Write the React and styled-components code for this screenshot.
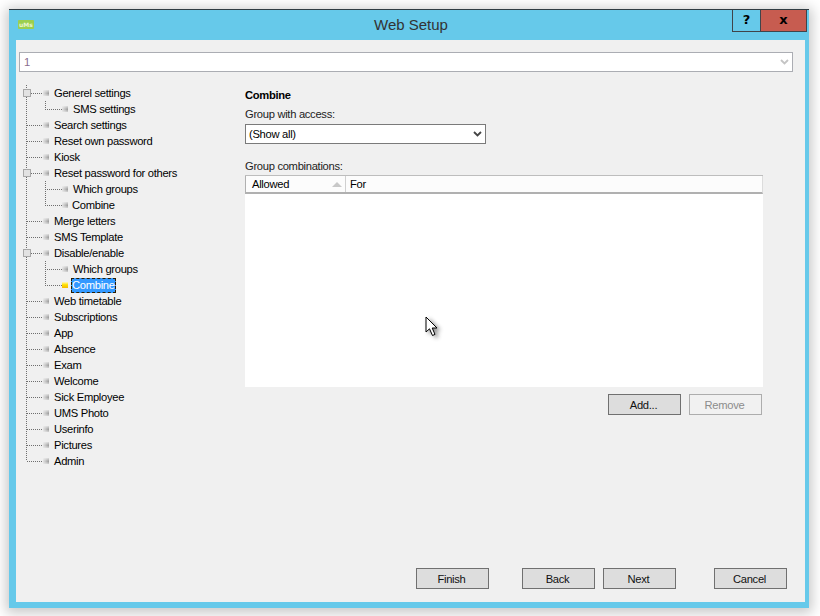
import React from "react";
import styled, { createGlobalStyle } from "styled-components";

const GlobalStyle = createGlobalStyle`
    html, body {
        margin: 0;
        padding: 0;
        background: #ffffff;
    }
    body {
        font-family: "Liberation Sans", Arial, sans-serif;
        font-size: 11.2px;
        letter-spacing: -0.3px;
        color: #000;
    }
`;

const Page = styled.div`
    width: 820px;
    height: 616px;
    padding: 9px 11px 8px 9px;
    box-sizing: border-box;
    overflow: hidden;
`;

const Window = styled.div`
    position: relative;
    height: 100%;
    display: flex;
    flex-direction: column;
    background: #66c9ea;
    border-top: 1px solid #2f3b42;
    box-sizing: border-box;
    box-shadow: 0 2px 12px 3px rgba(0, 0, 0, 0.22);
`;

const TitleBar = styled.div`
    height: 30px;
    display: flex;
    align-items: flex-start;
    justify-content: space-between;
    flex-shrink: 0;
`;

const Logo = styled.div`
    width: 16px;
    height: 9px;
    margin: 10px 0 0 9px;
    background: #9bcf4f;
    color: #eaf6d2;
    font-family: "DejaVu Sans", sans-serif;
    font-size: 6px;
    font-weight: bold;
    line-height: 9px;
    text-align: center;
    letter-spacing: 0;
    border-radius: 1px;
`;

const Title = styled.div`
    flex: 1;
    padding-left: 56px;
    text-align: center;
    font-size: 15px;
    letter-spacing: 0;
    line-height: 30px;
    color: #333;
`;

const Controls = styled.div`
    display: flex;
    margin-right: 2px;
    height: 21px;
    border: solid #40444a;
    border-width: 0 1px 1px 1px;
`;

const ControlButton = styled.div`
    width: ${(p) => p.$width}px;
    background: ${(p) => p.$bg};
    border-left: ${(p) => (p.$divided ? "1px solid #40444a" : "none")};
    font-family: "DejaVu Sans", sans-serif;
    font-size: 13px;
    font-weight: bold;
    letter-spacing: 0;
    line-height: 19px;
    text-align: center;
    color: #000;
`;

const Body = styled.div`
    flex: 1;
    margin: 0 4px 6px 7px;
    padding: 12px 12px 13px 3px;
    background: #f0f0f0;
    display: flex;
    flex-direction: column;
`;

const TopCombo = styled.div`
    height: 20px;
    box-sizing: border-box;
    background: #fff;
    border: 1px solid #abadb3;
    display: flex;
    align-items: center;
    justify-content: space-between;
    padding: 0 3px 0 4px;
    color: #8a6d8f;
    flex-shrink: 0;
`;

const Main = styled.div`
    flex: 1;
    display: flex;
    margin-top: 13px;
`;

const Tree = styled.div`
    width: 226px;
    flex-shrink: 0;
`;

const Row = styled.div`
    display: flex;
    align-items: center;
    height: 16px;
    white-space: nowrap;
`;

const Connector = styled.svg`
    flex-shrink: 0;
    display: block;
`;

const NodeIcon = styled.span`
    width: 6px;
    height: 6px;
    flex-shrink: 0;
    background: ${(p) =>
        p.$active
            ? "linear-gradient(180deg, #fff8c0, #ffe100 45%, #f5b800)"
            : "linear-gradient(90deg, rgba(240, 240, 240, 0.85), rgba(240, 240, 240, 0)), linear-gradient(180deg, #dcdcdc, #969696 55%, #d0d0d0)"};
`;

const NodeLabel = styled.span`
    margin-left: ${(p) => p.$gap}px;
    height: 15px;
    line-height: 15px;
    ${(p) =>
        p.$selected &&
        `
        background: #3399ff;
        color: #fff;
        outline: 1px dashed #2a1c00;
        outline-offset: -1px;
        padding: 0 1px;
    `}
`;

const Panel = styled.div`
    flex: 1;
    display: flex;
    flex-direction: column;
    align-items: flex-start;
`;

const Heading = styled.div`
    font-weight: 700;
    line-height: 16px;
    margin-top: 2px;
`;

const FieldLabel = styled.div`
    line-height: 16px;
    margin-top: ${(p) => p.$top}px;
    color: #222;
`;

const Select = styled.div`
    width: 241px;
    height: 20px;
    margin-top: 2px;
    box-sizing: border-box;
    background: #fff;
    border: 1px solid #7a7a7a;
    display: flex;
    align-items: center;
    justify-content: space-between;
    padding: 0 3px;
`;

const ListView = styled.div`
    width: 518px;
    height: 212px;
    margin-top: 1px;
    background: #fff;
    box-sizing: border-box;
    border-top: 1px solid #bdbdbd;
`;

const ListHeader = styled.div`
    display: flex;
    height: 18px;
    box-sizing: border-box;
    background: #fcfcfc;
    border-bottom: 2px solid #b0b0b0;
    border-left: 1px solid #b0b0b0;
    border-right: 1px solid #dcdcdc;
`;

const Column = styled.div`
    width: ${(p) => p.$width};
    flex: ${(p) => (p.$width ? "none" : 1)};
    display: flex;
    align-items: center;
    justify-content: space-between;
    box-sizing: border-box;
    padding: 0 3px 0 ${(p) => p.$pad}px;
    border-right: ${(p) => (p.$width ? "1px solid #d0d0d0" : "none")};
`;

const SortArrow = styled.span`
    width: 0;
    height: 0;
    border-left: 5px solid transparent;
    border-right: 5px solid transparent;
    border-bottom: 5px solid #c8c8c8;
`;

const ListActions = styled.div`
    display: flex;
    gap: 8px;
    margin: 7px 0 0 363px;
`;

const Button = styled.div`
    width: 73px;
    height: 21px;
    box-sizing: border-box;
    padding-right: 2px;
    background: ${(p) => (p.$disabled ? "#f1f1f1" : "#dddddd")};
    border: 1px solid ${(p) => (p.$disabled ? "#adadad" : "#707070")};
    color: ${(p) => (p.$disabled ? "#8c8c8c" : "#111")};
    display: flex;
    align-items: center;
    justify-content: center;
`;

const Footer = styled.div`
    display: flex;
    flex-shrink: 0;
    padding-left: 397px;
`;

const FooterGroup = styled.div`
    display: flex;
    gap: 8px;
    margin-left: ${(p) => p.$left}px;
`;

const Cursor = styled.svg`
    position: absolute;
    left: 416px;
    top: 306px;
    overflow: visible;
    filter: drop-shadow(3px 2px 2px rgba(0, 0, 0, 0.45));
`;

const nodes = [
    { label: "Generel settings", box: true, next: true },
    { label: "SMS settings", depth: 1, last: true },
    { label: "Search settings" },
    { label: "Reset own password" },
    { label: "Kiosk" },
    { label: "Reset password for others", box: true, next: true },
    { label: "Which groups", depth: 1 },
    { label: "Combine", depth: 1, last: true, gap: 4 },
    { label: "Merge letters" },
    { label: "SMS Template" },
    { label: "Disable/enable", box: true, next: true },
    { label: "Which groups", depth: 1 },
    { label: "Combine", depth: 1, last: true, selected: true, gap: 3 },
    { label: "Web timetable" },
    { label: "Subscriptions" },
    { label: "App" },
    { label: "Absence" },
    { label: "Exam" },
    { label: "Welcome" },
    { label: "Sick Employee" },
    { label: "UMS Photo" },
    { label: "Userinfo" },
    { label: "Pictures" },
    { label: "Admin", end: true },
];

const dots = { stroke: "#6e6e6e", strokeWidth: 1, strokeDasharray: "1 1", shapeRendering: "crispEdges" };

const TreeLines = ({ depth, box, next, last, end }) => {
    const width = depth ? 43 : 24;
    return (
        <Connector width={width} height="16">
            <line x1="7.5" y1="0" x2="7.5" y2={end ? 8 : 16} {...dots} />
            {depth ? (
                <>
                    <line x1="26.5" y1="0" x2="26.5" y2={last ? 8 : 16} {...dots} />
                    <line x1="26" y1="8.5" x2="43" y2="8.5" {...dots} />
                </>
            ) : (
                <line x1="8" y1="8.5" x2="24" y2="8.5" {...dots} />
            )}
            {next && <line x1="26.5" y1="13" x2="26.5" y2="16" {...dots} />}
            {box && <rect x="4.5" y="4.5" width="7" height="7" fill="#e2e2e2" stroke="#a8a8a8" />}
        </Connector>
    );
};

const Chevron = ({ color }) => (
    <svg width="9" height="6" viewBox="0 0 9 6">
        <path d="M1 1 L4.5 4.5 L8 1" fill="none" stroke={color} strokeWidth="1.8" />
    </svg>
);

const App = () => {
    return (
        <Page>
            <GlobalStyle />
            <Window>
                <TitleBar>
                    <Logo>uMs</Logo>
                    <Title>Web Setup</Title>
                    <Controls>
                        <ControlButton $width={27} $bg="#66c9ea">?</ControlButton>
                        <ControlButton $width={45} $bg="#c75c50" $divided>x</ControlButton>
                    </Controls>
                </TitleBar>
                <Body>
                    <TopCombo>
                        1
                        <Chevron color="#c4c4c4" />
                    </TopCombo>
                    <Main>
                        <Tree>
                            {nodes.map((node, index) => (
                                <Row key={index}>
                                    <TreeLines {...node} />
                                    <NodeIcon $active={node.selected} />
                                    <NodeLabel $gap={node.gap || 5} $selected={node.selected}>{node.label}</NodeLabel>
                                </Row>
                            ))}
                        </Tree>
                        <Panel>
                            <Heading>Combine</Heading>
                            <FieldLabel $top={3}>Group with access:</FieldLabel>
                            <Select>
                                (Show all)
                                <Chevron color="#444" />
                            </Select>
                            <FieldLabel $top={14}>Group combinations:</FieldLabel>
                            <ListView>
                                <ListHeader>
                                    <Column $width="100px" $pad={6}>
                                        Allowed
                                        <SortArrow />
                                    </Column>
                                    <Column $pad={4}>For</Column>
                                </ListHeader>
                            </ListView>
                            <ListActions>
                                <Button>Add...</Button>
                                <Button $disabled>Remove</Button>
                            </ListActions>
                        </Panel>
                    </Main>
                    <Footer>
                        <FooterGroup $left={0}>
                            <Button>Finish</Button>
                        </FooterGroup>
                        <FooterGroup $left={33}>
                            <Button>Back</Button>
                            <Button>Next</Button>
                        </FooterGroup>
                        <FooterGroup $left={38}>
                            <Button>Cancel</Button>
                        </FooterGroup>
                    </Footer>
                </Body>
                <Cursor width="14" height="21" viewBox="0 0 14 21">
                    <path d="M1 1 L1 16 L4.5 12.8 L7.5 19.5 L10 18.4 L7.2 12 L12 12 Z" fill="#fff" stroke="#000" strokeWidth="1" />
                </Cursor>
            </Window>
        </Page>
    );
};

export default App;
